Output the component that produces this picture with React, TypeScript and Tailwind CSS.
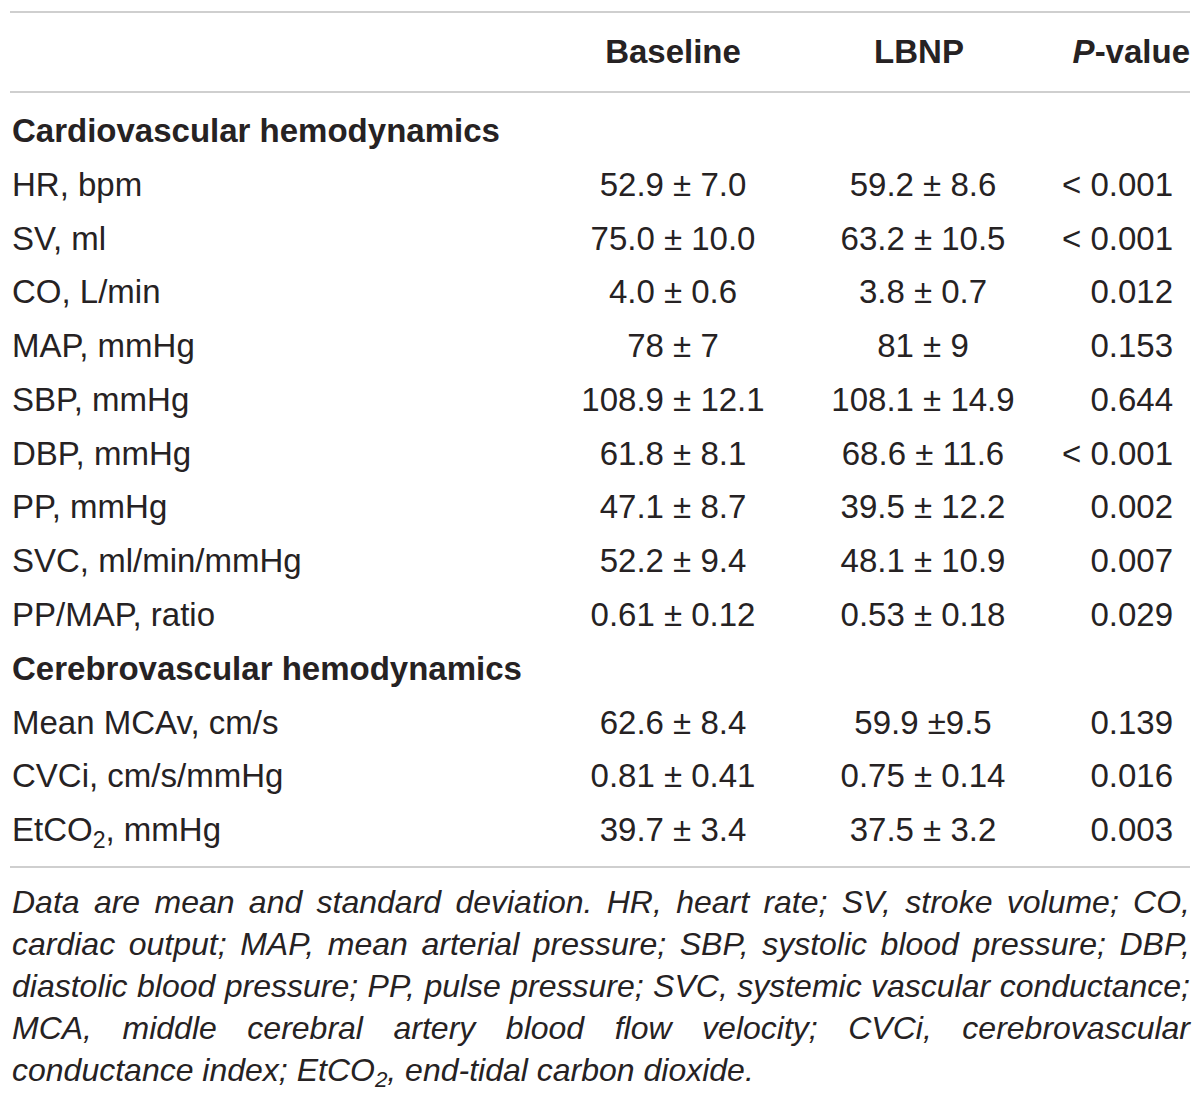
import React from 'react';

type Row = { label: React.ReactNode; base?: string; lbnp?: string; p?: string; section?: boolean };

const rows: Row[] = [
  { label: 'Cardiovascular hemodynamics', section: true },
  { label: 'HR, bpm', base: '52.9 ± 7.0', lbnp: '59.2 ± 8.6', p: '< 0.001' },
  { label: 'SV, ml', base: '75.0 ± 10.0', lbnp: '63.2 ± 10.5', p: '< 0.001' },
  { label: 'CO, L/min', base: '4.0 ± 0.6', lbnp: '3.8 ± 0.7', p: '0.012' },
  { label: 'MAP, mmHg', base: '78 ± 7', lbnp: '81 ± 9', p: '0.153' },
  { label: 'SBP, mmHg', base: '108.9 ± 12.1', lbnp: '108.1 ± 14.9', p: '0.644' },
  { label: 'DBP, mmHg', base: '61.8 ± 8.1', lbnp: '68.6 ± 11.6', p: '< 0.001' },
  { label: 'PP, mmHg', base: '47.1 ± 8.7', lbnp: '39.5 ± 12.2', p: '0.002' },
  { label: 'SVC, ml/min/mmHg', base: '52.2 ± 9.4', lbnp: '48.1 ± 10.9', p: '0.007' },
  { label: 'PP/MAP, ratio', base: '0.61 ± 0.12', lbnp: '0.53 ± 0.18', p: '0.029' },
  { label: 'Cerebrovascular hemodynamics', section: true },
  { label: 'Mean MCAv, cm/s', base: '62.6 ± 8.4', lbnp: '59.9 ±9.5', p: '0.139' },
  { label: 'CVCi, cm/s/mmHg', base: '0.81 ± 0.41', lbnp: '0.75 ± 0.14', p: '0.016' },
  {
    label: (
      <>
        EtCO<sub className="text-[0.7em] align-baseline relative top-[0.3em]">2</sub>, mmHg
      </>
    ),
    base: '39.7 ± 3.4',
    lbnp: '37.5 ± 3.2',
    p: '0.003',
  },
];

const justified = 'text-justify [text-align-last:justify]';

export default function App() {
  return (
    <div
      className="w-[1200px] h-[1102px] bg-white text-[#262223] pt-[11px] px-[10px]"
      style={{ fontFamily: '"Liberation Sans", Arial, sans-serif' }}
    >
      <div className="border-t-2 border-b-2 border-[#cfcfcf] h-[82px] flex items-center text-[33px] font-bold">
        <div className="w-[538px]" />
        <div className="w-[250px] text-center">Baseline</div>
        <div className="w-[250px] text-center pr-[8px]">LBNP</div>
        <div className="flex-1 text-right">
          <span className="italic">P</span>-value
        </div>
      </div>

      <div className="pt-[11px] pb-[9px] border-b-2 border-[#cfcfcf]">
        {rows.map((r, i) => (
          <div key={i} className="flex items-center h-[53.77px] text-[33px]">
            {r.section ? (
              <div className="flex-1 font-bold whitespace-nowrap pl-[2px]">{r.label}</div>
            ) : (
              <>
                <div className="w-[538px] whitespace-nowrap pl-[2px]">{r.label}</div>
                <div className="w-[250px] text-center whitespace-nowrap">{r.base}</div>
                <div className="w-[250px] text-center whitespace-nowrap">{r.lbnp}</div>
                <div className="flex-1 text-right pr-[17px] whitespace-nowrap">{r.p}</div>
              </>
            )}
          </div>
        ))}
      </div>

      <div className="pt-[13px] pl-[2px] italic text-[32px] leading-[42px]">
        <div className={justified}>Data are mean and standard deviation. HR, heart rate; SV, stroke volume; CO,</div>
        <div className={justified}>cardiac output; MAP, mean arterial pressure; SBP, systolic blood pressure; DBP,</div>
        <div className={justified}>diastolic blood pressure; PP, pulse pressure; SVC, systemic vascular conductance;</div>
        <div className={justified}>MCA, middle cerebral artery blood flow velocity; CVCi, cerebrovascular</div>
        <div>
          conductance index; EtCO<sub className="text-[0.7em] align-baseline relative top-[0.3em]">2</sub>, end-tidal
          carbon dioxide.
        </div>
      </div>
    </div>
  );
}
